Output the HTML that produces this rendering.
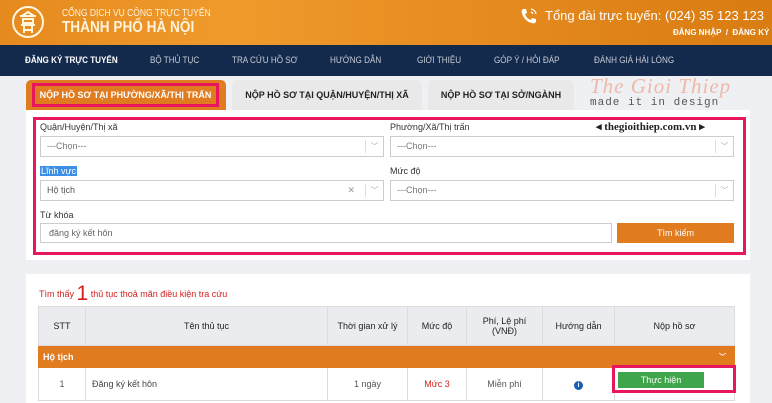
<!DOCTYPE html>
<html><head><meta charset="utf-8"><style>
*{margin:0;padding:0;box-sizing:border-box}
body{width:772px;height:403px;overflow:hidden;background:#eef0f3;font-family:"Liberation Sans",sans-serif;position:relative;font-size:9px;color:#333}
.a{position:absolute;white-space:nowrap}
.hdr{left:0;top:0;width:772px;height:45px;background:linear-gradient(90deg,#e58a1e,#f09a2c 30%,#e68c20 60%,#d97c12)}
.nav{left:0;top:45px;width:772px;height:31px;background:#142a4d}
.nav span{position:absolute;top:10px;font-size:9px;color:#c7ccd6;transform:scaleX(.9);transform-origin:left}
.tab{top:80px;height:31px;background:#e9e9e9;border-radius:5px 5px 0 0;font-size:9px;font-weight:bold;color:#222;text-align:center;line-height:31px}
.panel{background:#fff}
.lbl{font-size:9px;color:#333}
.sel{height:21px;border:1px solid #ccc;background:#fff;font-size:9px;color:#777;padding-left:6px;line-height:19px}
.sel i{position:absolute;right:0;top:3px;width:18px;height:13px;border-left:1px solid #ddd;color:#aaa;font-style:normal;text-align:center;line-height:13px;font-size:8px}
th,td{border:1px solid #dcdcdc;font-size:9px;text-align:center;font-weight:normal}
th{background:#eaecef;color:#222}
</style></head><body>
<div class="a hdr"></div>
<svg class="a" style="left:11px;top:5px" width="34" height="34" viewBox="0 0 34 34"><circle cx="17" cy="17" r="15" fill="none" stroke="#fff6e0" stroke-width="2"/><path d="M9 11h16M11 11l6-4 6 4M12 14h10v4H12zM10 20h14M13 20v8M21 20v8M13 25h8" stroke="#fff6e0" stroke-width="2" fill="none"/></svg>
<div class="a" style="left:62px;top:8px;font-size:10px;color:#fff3dc;transform:scaleX(.85);transform-origin:left">CỔNG DỊCH VỤ CÔNG TRỰC TUYẾN</div>
<div class="a" style="left:62px;top:19px;font-size:16px;font-weight:bold;color:#fff3dc;transform:scaleX(.85);transform-origin:left">THÀNH PHỐ HÀ NỘI</div>
<svg class="a" style="left:519px;top:6px" width="20" height="20" viewBox="0 0 20 20"><path d="M4 3l3 0 1 4-2 1c1 3 3 5 6 6l1-2 4 1 0 3c-1 1-2 2-4 1C8 16 4 12 3 7 2 5 3 4 4 3z" fill="#fff"/><path d="M12 3a6 6 0 0 1 5 5M12 6a3 3 0 0 1 2 2" stroke="#fff" fill="none" stroke-width="1.3"/></svg>
<div class="a" style="left:545px;top:8px;font-size:13px;color:#fff">Tổng đài trực tuyến: (024) 35 123 123</div>
<div class="a" style="left:673px;top:28px;font-size:8px;font-weight:bold;color:#fff">ĐĂNG NHẬP &nbsp;/&nbsp; ĐĂNG KÝ</div>
<div class="a nav">
<span style="left:25px;color:#fff;font-weight:bold">ĐĂNG KÝ TRỰC TUYẾN</span>
<span style="left:150px">BỘ THỦ TỤC</span><span style="left:232px">TRA CỨU HỒ SƠ</span><span style="left:330px">HƯỚNG DẪN</span><span style="left:417px">GIỚI THIỆU</span><span style="left:494px">GÓP Ý / HỎI ĐÁP</span><span style="left:594px">ĐÁNH GIÁ HÀI LÒNG</span></div>
<div class="a tab" style="left:26px;width:200px;background:#e07b1f;color:#fff"></div>
<div class="a" style="left:32px;top:83px;width:187px;height:24px;border:3px solid #e8175d;color:#fff;font-size:9px;font-weight:bold;text-align:center;line-height:18px">NỘP HỒ SƠ TẠI PHƯỜNG/XÃ/THỊ TRẤN</div>
<div class="a tab" style="left:232px;width:190px">NỘP HỒ SƠ TẠI QUẬN/HUYỆN/THỊ XÃ</div>
<div class="a tab" style="left:428px;width:146px">NỘP HỒ SƠ TẠI SỞ/NGÀNH</div>
<div class="a" style="left:590px;top:74px;font-size:21px;color:#f0b8a8;font-family:'Liberation Serif',serif;font-style:italic;letter-spacing:1px">The Gioi Thiep</div>
<div class="a" style="left:590px;top:97px;font-size:11px;color:#555;font-family:'Liberation Mono',monospace;letter-spacing:1px">made it in design</div>
<div class="a panel" style="left:26px;top:110px;width:724px;height:150px"></div>
<div class="a" style="left:33px;top:117px;width:713px;height:138px;border:3px solid #e8175d"></div>
<div class="a lbl" style="left:40px;top:122px">Quận/Huyện/Thị xã</div>
<div class="a lbl" style="left:390px;top:122px">Phường/Xã/Thị trấn</div>
<div class="a" style="left:596px;top:120px;font-size:11px;font-weight:bold;font-family:'Liberation Serif',serif;color:#222">◂ thegioithiep.com.vn ▸</div>
<div class="a sel" style="left:40px;top:136px;width:344px">---Chọn---<i>﹀</i></div>
<div class="a sel" style="left:390px;top:136px;width:344px">---Chọn---<i>﹀</i></div>
<div class="a lbl" style="left:40px;top:166px;background:#3b8fe8;color:#fff;padding:0 1px">Lĩnh vực</div>
<div class="a lbl" style="left:390px;top:166px">Mức độ</div>
<div class="a sel" style="left:40px;top:180px;width:344px;color:#555">Hộ tịch<span style="position:absolute;right:28px;color:#999">✕</span><i>﹀</i></div>
<div class="a sel" style="left:390px;top:180px;width:344px">---Chọn---<i>﹀</i></div>
<div class="a lbl" style="left:40px;top:210px">Từ khóa</div>
<div class="a sel" style="left:40px;top:223px;width:572px;height:20px;color:#666;padding-left:8px">đăng ký kết hôn</div>
<div class="a" style="left:617px;top:223px;width:117px;height:20px;background:#e07b1f;color:#fff;font-size:9px;text-align:center;line-height:20px">Tìm kiếm</div>
<div class="a panel" style="left:26px;top:274px;width:724px;height:129px"></div>
<div class="a" style="left:39px;top:282px;color:#d42020;font-size:9px">Tìm thấy <span style="font-size:21px;vertical-align:-3px">1</span> thủ tục thoả mãn điều kiện tra cứu</div>
<table class="a" style="left:38px;top:306px;width:697px;border-collapse:collapse">
<tr style="height:39px"><th style="width:47px">STT</th><th style="width:242px">Tên thủ tục</th><th style="width:80px">Thời gian xử lý</th><th style="width:59px">Mức độ</th><th style="width:76px">Phí, Lệ phí<br>(VNĐ)</th><th style="width:72px">Hướng dẫn</th><th>Nộp hồ sơ</th></tr>
<tr style="height:22px;background:#e07b1f"><td colspan="7" style="text-align:left;color:#fff;font-weight:bold;padding-left:4px;border-color:#e07b1f">Hộ tịch<span style="float:right;padding-right:8px;font-size:7px">﹀</span></td></tr>
<tr style="height:33px"><td style="color:#555">1</td><td style="text-align:left;padding-left:6px;color:#444">Đăng ký kết hôn</td><td style="color:#555">1 ngày</td><td style="color:#d42020">Mức 3</td><td style="color:#555">Miễn phí</td><td><span style="display:inline-block;width:9px;height:9px;border-radius:50%;background:#1a5fb4;color:#fff;font-size:7px;line-height:9px;font-weight:bold">i</span></td><td></td></tr>
</table>
<div class="a" style="left:612px;top:365px;width:124px;height:28px;border:3px solid #e8175d"></div>
<div class="a" style="left:618px;top:372px;width:86px;height:16px;background:#3fa54a;color:#fff;font-size:9px;text-align:center;line-height:16px">Thực hiện</div>
</body></html>
